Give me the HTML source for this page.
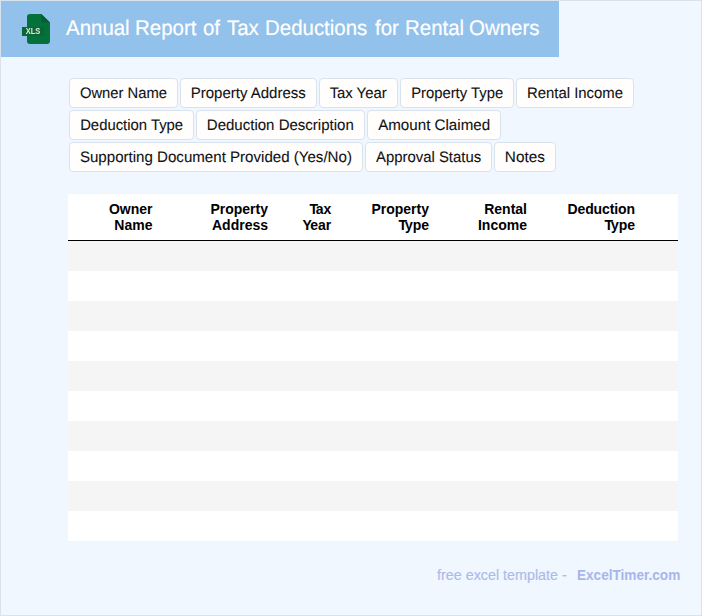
<!DOCTYPE html>
<html><head><meta charset="utf-8">
<style>
html,body{margin:0;padding:0;}
body{width:702px;height:616px;overflow:hidden;background:#f0f7ff;font-family:"Liberation Sans",sans-serif;position:relative;}
.frame{position:absolute;left:0;top:0;width:700px;height:614px;border:1px solid #d9e3ed;}
.hdr{position:absolute;left:1px;top:1px;width:558px;height:56px;background:#92c1eb;}
.hdr .t{position:absolute;left:0;top:16px;font-size:21.2px;line-height:24px;color:#fff;white-space:nowrap;text-rendering:geometricPrecision;-webkit-text-stroke:0.2px #fff;}
.hdr .t span{position:absolute;top:0;transform-origin:0 50%;transform:scaleX(0.965);}
.ico{position:absolute;left:20px;top:12px;will-change:transform;}
.tag{position:absolute;height:30px;box-sizing:border-box;border:1px solid #d9e3ee;border-radius:4px;background:#fffefd;font-size:15.2px;color:#111;line-height:28px;text-align:center;white-space:nowrap;}
.tbl{position:absolute;left:68px;top:193px;width:610px;height:349px;background:#fff;box-sizing:border-box;border-top:1px solid #f4f4f4;border-bottom:1px solid #f4f4f4;}
.th{position:absolute;font-weight:bold;font-size:14px;line-height:16px;color:#000;text-align:right;white-space:nowrap;top:7px;}
.hl{position:absolute;left:0;top:46px;width:610px;height:1px;background:#000;}
.row{position:absolute;left:0;width:610px;height:30px;background:#f5f5f5;}
.ft{position:absolute;top:566px;line-height:18px;white-space:nowrap;transform-origin:0 50%;}
.tag span{display:inline-block;text-rendering:geometricPrecision;-webkit-text-stroke:0.1px #111;transform-origin:50% 50%;}
.k{letter-spacing:-2.2px}.k2{letter-spacing:-1.6px}
</style></head><body>
<div class="frame"></div>
<div class="hdr">
<svg class="ico" width="32" height="34" viewBox="0 0 32 34">
<path d="M9 1 H20.3 L29 9.5 V28 a3 3 0 0 1 -3 3 H9 a3 3 0 0 1 -3 -3 V4 a3 3 0 0 1 3 -3z" fill="#04713b"/>
<path d="M20.3 1 L29 9.5 H20.3z" fill="#045f30"/>
<rect x="1" y="14" width="22" height="9" fill="#0a6735"/>
<text x="12" y="21.4" font-family="Liberation Sans, sans-serif" font-weight="bold" font-size="8.8" fill="#e2eadf" text-anchor="middle" textLength="14.6" lengthAdjust="spacingAndGlyphs">XLS</text>
</svg>
<div class="t"><span style="left:65.49px">Annual</span> <span style="left:134.46px">Report</span> <span style="left:201.83px">of</span> <span style="left:225.58px">Tax</span> <span style="left:263.87px">Deductions</span> <span style="left:373.79px">for</span> <span style="left:404.44px">Rental</span> <span style="left:468.48px">Owners</span></div>
</div>

<div class="tag" style="left:69px;top:78px;width:109px"><span style="transform:translateX(-0.3px) scaleX(0.9724)">Owner Name</span></div>
<div class="tag" style="left:180px;top:78px;width:137px"><span style="transform:scaleX(0.9871)">Property Address</span></div>
<div class="tag" style="left:319px;top:78px;width:79px"><span style="transform:scaleX(0.9783)">Tax Year</span></div>
<div class="tag" style="left:400px;top:78px;width:114px"><span style="transform:scaleX(0.9758)">Property Type</span></div>
<div class="tag" style="left:516px;top:78px;width:118px"><span style="transform:scaleX(0.9802)">Rental Income</span></div>
<div class="tag" style="left:69px;top:110px;width:125px"><span style="transform:scaleX(0.9785)">Deduction Type</span></div>
<div class="tag" style="left:196px;top:110px;width:169px"><span style="transform:scaleX(0.9894)">Deduction Description</span></div>
<div class="tag" style="left:367px;top:110px;width:134px"><span style="transform:scaleX(0.9975)">Amount Claimed</span></div>
<div class="tag" style="left:69px;top:142px;width:294px"><span style="transform:scaleX(0.9934)">Supporting Document Provided (Yes/No)</span></div>
<div class="tag" style="left:365px;top:142px;width:127px"><span style="transform:scaleX(0.9793)">Approval Status</span></div>
<div class="tag" style="left:494px;top:142px;width:62px"><span style="transform:scaleX(1.0079)">Notes</span></div>

<div class="tbl">
<div class="th" style="right:525.5px">Owner<br>Name</div>
<div class="th" style="right:410px">Property<br>Address</div>
<div class="th" style="right:346.7px"><span class="k">T</span>ax<br><span class="k2">Y</span>ear</div>
<div class="th" style="right:249px">Property<br><span class="k">T</span>ype</div>
<div class="th" style="right:151px">Rental<br>Income</div>
<div class="th" style="right:43px"><span style="letter-spacing:-0.1px">Deduction</span><br><span class="k">T</span>ype</div>
<div class="hl"></div>
<div class="row" style="top:47px"></div>
<div class="row" style="top:107px"></div>
<div class="row" style="top:167px"></div>
<div class="row" style="top:227px"></div>
<div class="row" style="top:287px"></div>
</div>

<div class="ft" style="left:437px;color:#aabbe8;-webkit-text-stroke:0.15px #aabbe8;font-size:15px;transform:scaleX(0.955)">free excel template -</div>
<div class="ft" style="left:576.7px;color:#a7b6ea;font-weight:bold;font-size:15px;transform:scaleX(0.906)">ExcelTimer.com</div>
</body></html>
